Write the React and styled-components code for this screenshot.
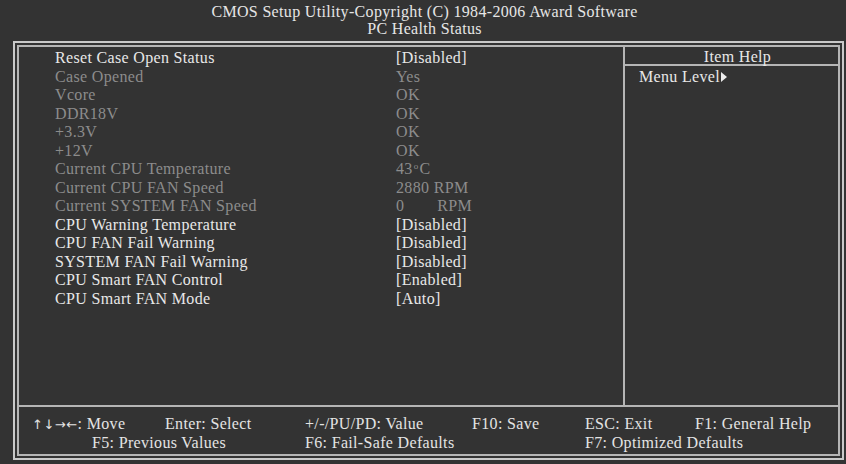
import React from "react";
import styled, { createGlobalStyle } from "styled-components";

const Global = createGlobalStyle`
  html, body { margin: 0; padding: 0; background: #333333; }
  body { font-family: "Liberation Serif", "Times New Roman", serif; }
`;

const Screen = styled.div`
  width: 846px;
  height: 464px;
  background: #333333;
  color: #e4e4e4;
  font-size: 16px;
  letter-spacing: 0.33px;
  overflow: hidden;
`;

const Header = styled.header`
  height: 41px;
  display: flex;
  flex-direction: column;
  align-items: center;
  padding-top: 3px;
  padding-left: 3px;
  box-sizing: border-box;
  line-height: 17px;
  color: #e6e6e6;
`;

const OuterFrame = styled.div`
  margin-left: 13px;
  width: 831px;
  height: 419px;
  box-sizing: border-box;
  border: 2px solid #c9c9c9;
  padding: 2px;
`;

const InnerFrame = styled.div`
  height: 100%;
  box-sizing: border-box;
  border: 2px solid #b5b5b5;
  display: grid;
  grid-template-rows: 358px 2px 1fr;
`;

const Main = styled.div`
  display: grid;
  grid-template-columns: 604px 2px 1fr;
`;

const HLine = styled.div`
  background: #b5b5b5;
`;

const VLine = styled.div`
  background: #b5b5b5;
`;

const List = styled.div`
  padding: 2px 0 0 36px;
  line-height: 18.5px;
`;

const Row = styled.div`
  display: grid;
  grid-template-columns: 341px 1fr;
  height: 18.5px;
  color: ${(p) => (p.$dim ? "#8c8c8c" : "#e8e8e8")};
  white-space: nowrap;
`;

const Deg = styled.span`
  display: inline-block;
  font-size: 9px;
  line-height: 0;
  transform: translateY(-5px);
  margin: 0 1px;
`;

const Gap = styled.span`
  display: inline-block;
  width: 33px;
`;

const Help = styled.div`
  display: flex;
  flex-direction: column;
`;

const HelpTitle = styled.div`
  height: 16px;
  padding-top: 1px;
  line-height: 18px;
  text-align: center;
  padding-left: 12px;
  border-bottom: 2px solid #b5b5b5;
  color: #e8e8e8;
`;

const HelpText = styled.div`
  padding: 2px 0 0 14px;
  line-height: 18px;
  display: flex;
  align-items: center;
  gap: 1px;
  color: #e8e8e8;
`;

const Footer = styled.div`
  display: grid;
  grid-template-columns: 273px 280px 1fr;
  padding: 7px 0 0 13px;
  color: #e4e4e4;
`;

const KeyCol = styled.div`
  display: flex;
  flex-direction: column;
`;

const KeyLine = styled.div`
  display: grid;
  grid-template-columns: ${(p) => p.$cols || "1fr"};
  padding-left: ${(p) => p.$indent || 0}px;
  height: 19px;
  line-height: 19px;
  white-space: nowrap;
`;

const Arrows = styled.span`
  font-family: "DejaVu Sans", sans-serif;
  font-size: 13px;
  line-height: 0;
  letter-spacing: 0.5px;
`;

const Arrow = () => (
  <svg width="6" height="10" viewBox="0 0 6 10">
    <path d="M0 0 L6 5 L0 10 Z" fill="#ececec" />
  </svg>
);

const rows = [
  { l: "Reset Case Open Status", v: "[Disabled]" },
  { l: "Case Opened", v: "Yes", d: true },
  { l: "Vcore", v: "OK", d: true },
  { l: "DDR18V", v: "OK", d: true },
  { l: "+3.3V", v: "OK", d: true },
  { l: "+12V", v: "OK", d: true },
  { l: "Current CPU Temperature", v: <>43<Deg>o</Deg>C</>, d: true },
  { l: "Current CPU FAN Speed", v: "2880 RPM", d: true },
  { l: "Current SYSTEM FAN Speed", v: <>0<Gap />RPM</>, d: true },
  { l: "CPU Warning Temperature", v: "[Disabled]" },
  { l: "CPU FAN Fail Warning", v: "[Disabled]" },
  { l: "SYSTEM FAN Fail Warning", v: "[Disabled]" },
  { l: "CPU Smart FAN Control", v: "[Enabled]" },
  { l: "CPU Smart FAN Mode", v: "[Auto]" },
];

export default function App() {
  return (
    <Screen>
      <Global />
      <Header>
        <div>CMOS Setup Utility-Copyright (C) 1984-2006 Award Software</div>
        <div>PC Health Status</div>
      </Header>
      <OuterFrame>
        <InnerFrame>
          <Main>
            <List>
              {rows.map((r, i) => (
                <Row key={i} $dim={r.d}>
                  <span>{r.l}</span>
                  <span>{r.v}</span>
                </Row>
              ))}
            </List>
            <VLine />
            <Help>
              <HelpTitle>Item Help</HelpTitle>
              <HelpText>
                Menu Level
                <Arrow />
              </HelpText>
            </Help>
          </Main>
          <HLine />
          <Footer>
            <KeyCol>
              <KeyLine $cols="133px 1fr">
                <span><Arrows>↑↓→←</Arrows>: Move</span>
                <span>Enter: Select</span>
              </KeyLine>
              <KeyLine $indent={60}>F5: Previous Values</KeyLine>
            </KeyCol>
            <KeyCol>
              <KeyLine $cols="167px 1fr">
                <span>+/-/PU/PD: Value</span>
                <span>F10: Save</span>
              </KeyLine>
              <KeyLine>F6: Fail-Safe Defaults</KeyLine>
            </KeyCol>
            <KeyCol>
              <KeyLine $cols="110px 1fr">
                <span>ESC: Exit</span>
                <span>F1: General Help</span>
              </KeyLine>
              <KeyLine>F7: Optimized Defaults</KeyLine>
            </KeyCol>
          </Footer>
        </InnerFrame>
      </OuterFrame>
    </Screen>
  );
}
